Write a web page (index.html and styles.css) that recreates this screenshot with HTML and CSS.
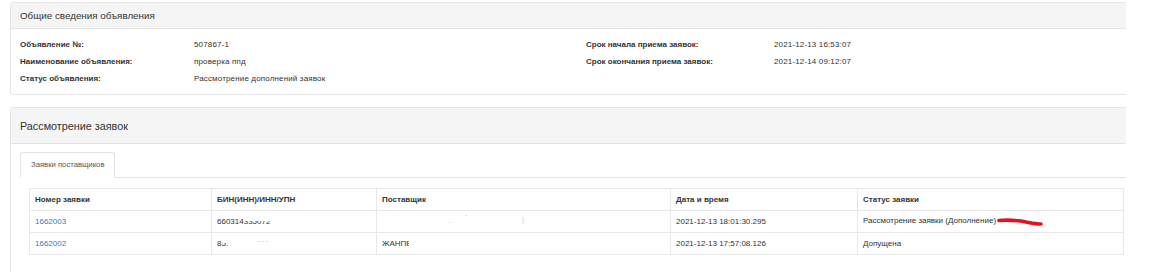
FILE: index.html
```html
<!DOCTYPE html>
<html lang="ru">
<head>
    <meta charset="UTF-8">
    <title>Рассмотрение заявок</title>
    <link rel="stylesheet" href="styles.css">
</head>
<body>
    <div class="panel info-panel">
        <div class="panel-heading">
            <h3 class="panel-title">Общие сведения объявления</h3>
        </div>
        <div class="panel-body info-grid">
            <div class="label">Объявление №:</div>
            <div class="value">507867-1</div>
            <div class="label">Срок начала приема заявок:</div>
            <div class="value">2021-12-13 16:53:07</div>

            <div class="label">Наименование объявления:</div>
            <div class="value">проверка ппд</div>
            <div class="label">Срок окончания приема заявок:</div>
            <div class="value">2021-12-14 09:12:07</div>

            <div class="label">Статус объявления:</div>
            <div class="value">Рассмотрение дополнений заявок</div>
            <div></div>
            <div></div>
        </div>
    </div>

    <div class="panel review-panel">
        <div class="panel-heading tall">
            <h3 class="panel-title big">Рассмотрение заявок</h3>
        </div>
        <div class="panel-body tabs-body">
            <ul class="nav-tabs">
                <li class="active">Заявки поставщиков</li>
            </ul>
            <div class="tab-content">
                <table class="bids">
                    <colgroup>
                        <col style="width: 182px">
                        <col style="width: 165px">
                        <col style="width: 294px">
                        <col style="width: 187px">
                        <col>
                    </colgroup>
                    <thead>
                        <tr>
                            <th>Номер заявки</th>
                            <th>БИН(ИНН)/ИНН/УПН</th>
                            <th>Поставщик</th>
                            <th>Дата и время</th>
                            <th>Статус заявки</th>
                        </tr>
                    </thead>
                    <tbody>
                        <tr>
                            <td><a href="#">1662003</a></td>
                            <td>660314<span class="masked">335072</span></td>
                            <td><span class="crumbs"><i class="c1">-</i><i class="c2">. .</i><i class="c3">|</i></span></td>
                            <td>2021-12-13 18:01:30.295</td>
                            <td>Рассмотрение заявки (Дополнение)<svg class="scribble" width="48" height="10" viewBox="0 0 48 10"><path d="M3 3.5 C 12 2.5, 22 3.5, 30 5 S 40 7, 45 7" fill="none" stroke="#e5121b" stroke-width="3.6" stroke-linecap="round"/></svg></td>
                        </tr>
                        <tr>
                            <td><a href="#">1662002</a></td>
                            <td>8<span class="masked">5.</span><span class="tops">- - -</span></td>
                            <td>ЖАНП<span class="cut">Е</span></td>
                            <td>2021-12-13 17:57:08.126</td>
                            <td>Допущена</td>
                        </tr>
                    </tbody>
                </table>
            </div>
        </div>
    </div>
</body>
</html>
```

FILE: styles.css
```css
body {
    margin: 0;
    padding: 2px 0 0 10px;
    font-family: "Liberation Sans", Arial, sans-serif;
    font-size: 8px;
    color: #333;
    background: #fff;
}
.panel {
    width: 1116px;
    border: 1px solid #e6e6e6;
    border-right: none;
    border-radius: 3px 0 0 3px;
    background: #fff;
    box-sizing: border-box;
}
.info-panel {
    margin-bottom: 12px;
}
.panel-heading {
    background: #f5f5f5;
    border-bottom: 1px solid #e3e3e3;
    padding: 0 9px;
    height: 25px;
    display: flex;
    align-items: center;
}
.panel-heading.tall {
    height: 35px;
}
.panel-title {
    margin: 0;
    font-size: 9.8px;
    font-weight: normal;
    color: #333;
}
.panel-title.big {
    font-size: 10.8px;
}
.info-grid {
    display: grid;
    grid-template-columns: 174px 392px 188px 1fr;
    grid-auto-rows: 17px;
    align-items: center;
    padding: 7px 9px 7px;
}
.label {
    font-weight: bold;
    color: #333;
}
.value {
    color: #333;
    letter-spacing: 0.15px;
}
.tabs-body {
    padding: 8px 0 0 9px;
    height: 128px;
}
.nav-tabs {
    list-style: none;
    margin: 0;
    padding: 0;
    display: flex;
    border-bottom: 1px solid #e3e3e3;
}
.nav-tabs li {
    padding: 0 10px;
    height: 24px;
    line-height: 24px;
    font-size: 7.7px;
    border: 1px solid #e3e3e3;
    border-bottom-color: #fff;
    border-radius: 3px 3px 0 0;
    margin-bottom: -1px;
    color: #555;
    background: #fff;
}
.tab-content {
    padding: 10px 2px 0 9px;
}
.bids {
    width: 1095px;
    border-collapse: collapse;
    table-layout: fixed;
}
.bids th, .bids td {
    border: 1px solid #e8e8e8;
    height: 21px;
    padding: 0 5px;
    text-align: left;
    white-space: nowrap;
}
.bids th {
    font-weight: bold;
    color: #333;
}
.bids a {
    color: #3a7bbf;
    text-decoration: none;
}
.masked, .cut {
    position: relative;
}
.masked::after {
    content: "";
    position: absolute;
    left: 0;
    right: -2px;
    top: -2px;
    height: 6px;
    background: #fff;
}
.cut::after {
    content: "";
    position: absolute;
    left: 3px;
    right: -2px;
    top: -2px;
    bottom: -2px;
    background: #fff;
}
.tops {
    position: relative;
    top: -3px;
    margin-left: 30px;
    font-size: 6px;
    color: #999;
}
.crumbs {
    position: relative;
    display: inline-block;
    width: 150px;
    height: 10px;
}
.crumbs i {
    position: absolute;
    font-style: normal;
    color: #aaa;
    font-size: 6px;
}
.crumbs .c1 {
    left: 83px;
    top: -4px;
}
.crumbs .c2 {
    left: 66px;
    top: 2px;
}
.crumbs .c3 {
    left: 140px;
    top: -1px;
    color: #ccc;
    font-size: 8px;
}
.scribble {
    vertical-align: -4px;
    margin-left: 0;
}
```
